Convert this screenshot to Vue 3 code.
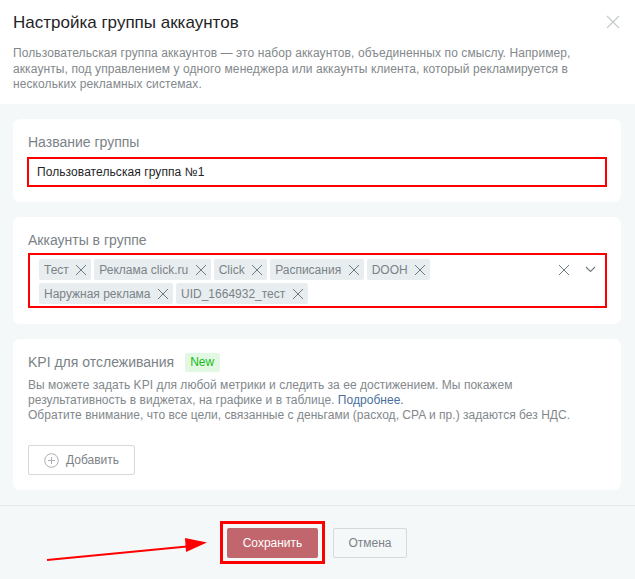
<script setup>
const chips = [
  ['Тест', 'Реклама click.ru', 'Click', 'Расписания', 'DOOH'],
  ['Наружная реклама', 'UID_1664932_тест']
]
</script>

<template>
  <div class="modal">
    <header class="head">
      <div class="title-row">
        <h1 class="title">Настройка группы аккаунтов</h1>
        <svg class="close" width="14" height="14" viewBox="0 0 14 14"><path d="M1 1l12 12M13 1L1 13" stroke="#c4c9cc" stroke-width="1.2" fill="none"/></svg>
      </div>
      <p class="desc">Пользовательская группа аккаунтов — это набор аккаунтов, объединенных по смыслу. Например, аккаунты, под управлением у одного менеджера или аккаунты клиента, который рекламируется в нескольких рекламных системах.</p>
    </header>

    <main class="body">
      <section class="card card-name">
        <div class="label">Название группы</div>
        <div class="name-input">Пользовательская группа №1</div>
      </section>

      <section class="card card-acc">
        <div class="label">Аккаунты в группе</div>
        <div class="acc-input">
          <div class="rows">
            <div v-for="(row, i) in chips" :key="i" class="row">
              <span v-for="c in row" :key="c" class="chip">
                {{ c }}
                <svg width="12" height="12" viewBox="0 0 12 12"><path d="M1 1l10 10M11 1L1 11" stroke="#6f7a80" stroke-width="1" fill="none"/></svg>
              </span>
            </div>
          </div>
          <div class="controls">
            <svg width="12" height="12" viewBox="0 0 12 12"><path d="M1 1l10 10M11 1L1 11" stroke="#6f7a80" stroke-width="1" fill="none"/></svg>
            <svg width="11" height="7" viewBox="0 0 11 7"><path d="M1 1l4.5 4.5L10 1" stroke="#6f7a80" stroke-width="1.1" fill="none"/></svg>
          </div>
        </div>
      </section>

      <section class="card card-kpi">
        <div class="kpi-head"><span class="kpi-title">KPI для отслеживания</span><span class="new">New</span></div>
        <p class="kpi-text">Вы можете задать KPI для любой метрики и следить за ее достижением. Мы покажем<br>результативность в виджетах, на графике и в таблице. <a class="link">Подробнее.</a><br>Обратите внимание, что все цели, связанные с деньгами (расход, CPA и пр.) задаются без НДС.</p>
        <button class="add">
          <svg width="15" height="15" viewBox="0 0 15 15"><circle cx="7.5" cy="7.5" r="6.8" stroke="#a9afb3" fill="none"/><path d="M7.5 4v7M4 7.5h7" stroke="#a9afb3" fill="none"/></svg>
          Добавить
        </button>
      </section>
    </main>

    <footer class="foot">
      <div class="save-frame"><button class="save">Сохранить</button></div>
      <button class="cancel">Отмена</button>
      <svg class="arrow" width="170" height="30" viewBox="0 0 170 30"><path d="M1 23L141 9.5" stroke="#f00" stroke-width="2" fill="none"/><path d="M139 1l22 4.5-21 9.5z" fill="#f00"/></svg>
    </footer>
  </div>
</template>

<style>
html, body { margin: 0; background: #f5f8f9; }
</style>

<style scoped>
.modal {
  width: 635px;
  height: 579px;
  position: relative;
  overflow: hidden;
  background: #f5f8f9;
  font-family: "Liberation Sans", Arial, sans-serif;
  color: #7b8287;
}
.head {
  background: #fff;
  height: 104px;
  padding: 11px 13px 0;
  box-sizing: border-box;
}
.title-row { display: flex; justify-content: space-between; align-items: flex-start; }
.title { margin: 0; font-size: 17px; line-height: 24px; font-weight: 400; color: #1f2427; }
.close { margin: 4px 2px 0 0; }
.desc { margin: 11px 0 0; max-width: 590px; font-size: 12px; line-height: 15.5px; letter-spacing: .1px; color: #82888c; }
.body { padding: 15px 14px 0 13px; display: flex; flex-direction: column; gap: 15px; height: 401px; box-sizing: border-box; }
.card { background: #fff; border-radius: 7px; padding: 0 14px; box-sizing: border-box; }
.card-name { height: 83px; padding-top: 14px; }
.card-acc { height: 107px; padding-top: 14px; }
.card-kpi { height: 151px; padding: 13px 15px 0; }
.label { font-size: 14px; line-height: 18px; color: #7b8287; padding-left: 1px; }
.name-input {
  margin-top: 6px;
  width: 580px;
  height: 30px;
  border: 2px solid #f00;
  box-sizing: border-box;
  padding-left: 8px;
  font-size: 12px;
  line-height: 26px;
  letter-spacing: .08px;
  color: #1f2427;
}
.acc-input {
  margin-top: 4px;
  margin-left: 1px;
  width: 579px;
  height: 55px;
  border: 2px solid #f00;
  box-sizing: border-box;
  padding: 4px 9px;
  display: flex;
  justify-content: space-between;
}
.rows { display: flex; flex-direction: column; gap: 3px; }
.row { display: flex; gap: 3px; }
.chip {
  height: 21px;
  background: #e8eef0;
  border-radius: 2px;
  padding: 0 4px 0 5px;
  display: inline-flex;
  align-items: center;
  gap: 6.5px;
  font-size: 12px;
  color: #7b8287;
}
.controls { display: flex; align-items: center; gap: 15px; height: 21px; }
.kpi-head { display: flex; align-items: center; gap: 11px; height: 20px; }
.kpi-title { font-size: 14px; color: #7b8287; }
.new { background: #e3f8e3; color: #18bb18; font-size: 12px; line-height: 19px; padding: 0 6px 0 5px; border-radius: 2px; }
.kpi-text { margin: 6px 0 0; font-size: 12px; line-height: 15px; letter-spacing: .03px; color: #82888c; }
.link { color: #4a6f9c; }
.add {
  margin-top: 22px;
  width: 107px;
  height: 30px;
  background: #fff;
  border: 1px solid #d4d9dc;
  border-radius: 2px;
  display: flex;
  align-items: center;
  justify-content: center;
  gap: 7px;
  font: inherit;
  font-size: 12px;
  color: #7b8287;
  padding: 0;
}
.foot {
  border-top: 1px solid #e6ebed;
  height: 74px;
  box-sizing: border-box;
  padding-top: 15px;
  display: flex;
  align-items: flex-start;
  gap: 8px;
  padding-left: 220px;
  position: relative;
}
.save-frame { border: 3px solid #f00; padding: 4px; height: 43px; box-sizing: border-box; }
.save {
  width: 91px;
  height: 30px;
  display: block;
  margin: 0;
  background: #c1666c;
  color: #fff;
  border: 0;
  border-radius: 2px;
  font: inherit;
  font-size: 12px;
  padding: 0;
}
.cancel {
  margin-top: 7px;
  width: 74px;
  height: 30px;
  background: transparent;
  border: 1px solid #d4d9dc;
  border-radius: 2px;
  font: inherit;
  font-size: 12px;
  color: #7b8287;
  padding: 0;
}
.arrow { position: absolute; left: 46px; top: 31px; }
</style>
